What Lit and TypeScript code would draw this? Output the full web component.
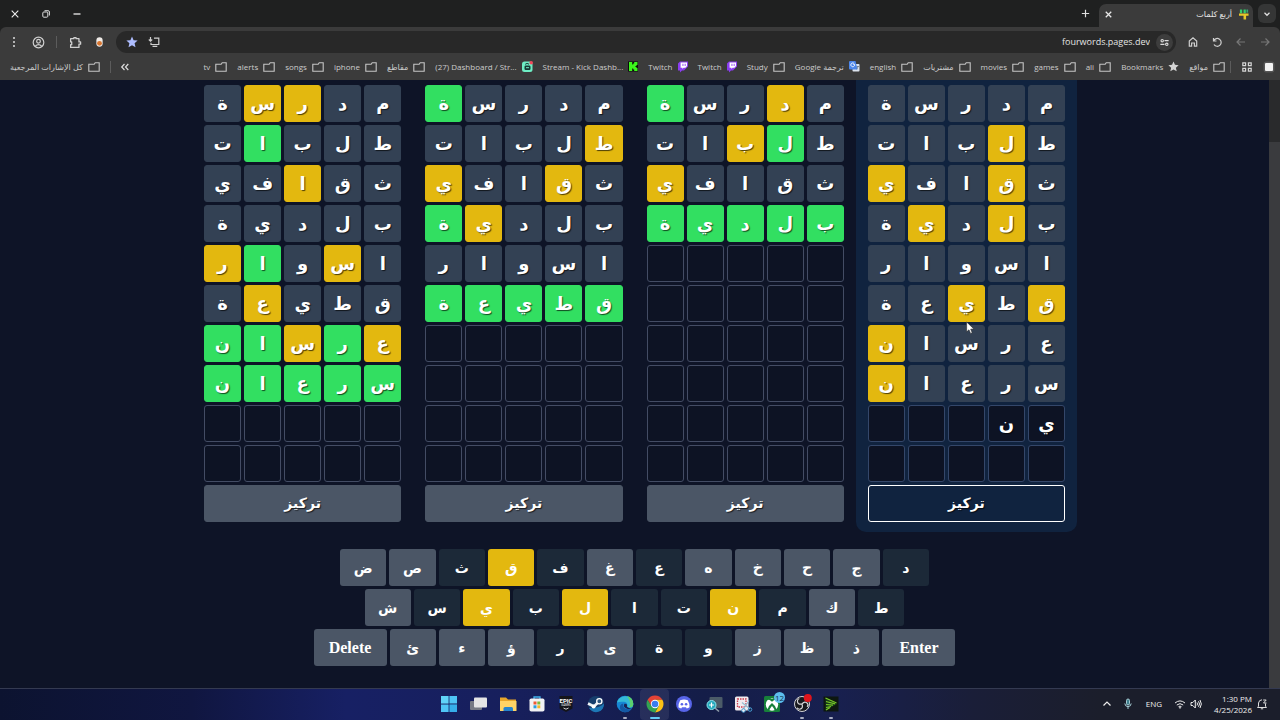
import { LitElement, html, css, svg, TemplateResult } from "lit";
import { customElement, property, state } from "lit/decorators.js";
import { classMap } from "lit/directives/class-map.js";

type Mark = "g" | "y" | "x";
interface Guess { word: string; marks: string }
interface Board { guesses: Guess[]; typing?: string }

const ROWS = 10;
const COLS = 5;

const BOARDS: Board[] = [
  {
    guesses: [
      { word: "مدرسة", marks: "xxxxx" },
      { word: "طلبات", marks: "xyxxx" },
      { word: "ثقافي", marks: "xyxxy" },
      { word: "بلدية", marks: "xyxyx" },
      { word: "اسوار", marks: "xxxxx" },
      { word: "قطيعة", marks: "yxyxx" },
      { word: "عرسان", marks: "xxxxy" },
      { word: "سرعان", marks: "xxxxy" },
    ],
    typing: "ين",
  },
  {
    guesses: [
      { word: "مدرسة", marks: "xyxxg" },
      { word: "طلبات", marks: "xgyxx" },
      { word: "ثقافي", marks: "xxxxy" },
      { word: "بلدية", marks: "ggggg" },
    ],
  },
  {
    guesses: [
      { word: "مدرسة", marks: "xxxxg" },
      { word: "طلبات", marks: "yxxxx" },
      { word: "ثقافي", marks: "xyxxy" },
      { word: "بلدية", marks: "xxxyg" },
      { word: "اسوار", marks: "xxxxx" },
      { word: "قطيعة", marks: "ggggg" },
    ],
  },
  {
    guesses: [
      { word: "مدرسة", marks: "xxyyx" },
      { word: "طلبات", marks: "xxxgx" },
      { word: "ثقافي", marks: "xxyxx" },
      { word: "بلدية", marks: "xxxxx" },
      { word: "اسوار", marks: "xyxgy" },
      { word: "قطيعة", marks: "xxxyx" },
      { word: "عرسان", marks: "ygygg" },
      { word: "سرعان", marks: "ggggg" },
    ],
  },
];

const KEY_ROWS: string[][] = [
  ["ض", "ص", "ث", "ق", "ف", "غ", "ع", "ه", "خ", "ح", "ج", "د"],
  ["ش", "س", "ي", "ب", "ل", "ا", "ت", "ن", "م", "ك", "ط"],
  ["Delete", "ئ", "ء", "ؤ", "ر", "ى", "ة", "و", "ز", "ظ", "ذ", "Enter"],
];
const PRESENT = "قيلن";
const ABSENT = "ثفعدسباتمطرةو";

const folder = html`<svg viewBox="0 0 12 10" width="12" height="10" fill="none" stroke="#c6c6c6" stroke-width="1.1"><path d="M.8 2.2h5.4l1-1.4h4v8.400H.8z"/></svg>`;
const twitch = html`<svg viewBox="0 0 10 11" width="10" height="12"><path fill="#8b3df0" d="M2 0 0 2v7h2v2l2-2h2l4-4V0z"/><path fill="#fff" d="M2.600 1H9v3.600L7.400 6.200H5.600L4.400 7.400V6.200H2.600z"/><path fill="#8b3df0" d="M4.500 2.300h.9v2.200h-.9zM6.700 2.300h.9v2.200h-.9z"/></svg>`;
const kick = html`<svg viewBox="0 0 10 10" width="10" height="11"><path fill="#0b0b0b" d="M0 0h10v10H0z"/><path fill="#3cf51c" d="M1 .5h3.200v2.500h1v-1h1V.500h3.300v3h-1v1h-1v1h1v1h1v3H6.200v-1.500h-1v-1h-1v2.500H1z"/></svg>`;
const streamDash = html`<svg viewBox="0 0 11 11" width="11" height="11"><rect y=".5" width="10.500" height="10.500" rx="2.500" fill="#6eeec5"/><rect x="2.500" y="4.500" width="6" height="4.500" rx="1.200" fill="#183a35"/><path d="M3.200 3.300Q5 1.500 7 3.200" stroke="#183a35" fill="none"/><path d="M4 6.700h3" stroke="#6eeec5"/><circle cx="9.200" cy="1.800" r="1.800" fill="#f0485a"/></svg>`;
const translate = html`<svg viewBox="0 0 11 11" width="11" height="11"><rect x="3.500" y="3" width="7" height="7.500" rx=".8" fill="#dbe3ee"/><path d="M0 1Q0 0 1 0h5.500l2 8.500H1Q0 8.500 0 7.500z" fill="#4c86ea"/><path d="M5.700 3.300H4.200M5.600 3.400A1.900 1.900 0 1 1 5 2.400" stroke="#fff" stroke-width=".9" fill="none"/><path d="M7.700 5.500H10M8.900 5v.8q-.4 1.700-1.300 2.500" stroke="#607080" stroke-width=".7" fill="none"/></svg>`;
const starSmall = html`<svg viewBox="0 0 12 12" width="11" height="11"><path fill="#d4d4d4" d="m6 .5 1.600 3.700 4 .4-3 2.700.9 4L6 9.200 2.500 11.300l.9-4-3-2.700 4-.4z"/></svg>`;

const BOOKMARKS: [string, TemplateResult][] = [
  ["مواقع", folder],
  ["Bookmarks", starSmall],
  ["ali", folder],
  ["games", folder],
  ["movies", folder],
  ["مشتريات", folder],
  ["english", folder],
  ["Google ترجمة", translate],
  ["Study", folder],
  ["Twitch", twitch],
  ["Twitch", twitch],
  ["Stream - Kick Dashb...", kick],
  ["(27) Dashboard / Str...", streamDash],
  ["مقاطع", folder],
  ["iphone", folder],
  ["songs", folder],
  ["alerts", folder],
  ["tv", folder],
];

const line = (body: unknown, size = 12, color = "#cfcfcf", width = 1.2) => html`<svg
  viewBox="0 0 12 12" width=${size} height=${size} fill="none" stroke=${color} stroke-width=${width}>${body}</svg>`;

@customElement("browser-chrome")
export class BrowserChrome extends LitElement {
  static styles = css`
    :host { display: block; direction: rtl; font: 9px/14px "Open Sans", "Noto Sans", "DejaVu Sans", sans-serif; color: #d6d6d6; background: #1f2020; }
    svg { display: block; flex: none; }
    button { border: 0; padding: 0; background: none; color: inherit; font: inherit; display: flex; align-items: center; justify-content: center; flex: none; }
    .strip { display: flex; align-items: flex-end; height: 27px; box-sizing: border-box; padding: 0 4px 0 7px; }
    .strip > button { height: 27px; }
    .strip > .search { width: 18px; height: 19px; border-radius: 6px; background: #353636; margin: 0 0 4px 5px; }
    .tab { display: flex; align-items: center; gap: 7px; width: 154px; height: 23px; box-sizing: border-box; padding: 0 4px 3px 4px; background: #3b3b3b; border-radius: 7px 7px 0 0; }
    .title { flex: 1; font-size: 8px; color: #e4e4e4; }
    .plus { width: 28px; }
    .windows { display: flex; margin-right: auto; height: 27px; }
    .windows button { width: 31px; }
    .windows button:last-child { width: 16px; margin-right: 7px; }
    .bar { display: flex; align-items: center; height: 30px; background: #3b3b3b; border-radius: 6px 6px 0 0; padding: 0 9px 0 8px; box-sizing: border-box; }
    .nav { display: flex; gap: 12px; padding-left: 11px; }
    .box { flex: 1; min-width: 0; height: 22px; border-radius: 11px; background: #282828; display: flex; align-items: center; padding: 0 3px 0 10px; }
    .site { width: 17px; height: 17px; border-radius: 9px; background: #3d3d3d; }
    .url { flex: 1; min-width: 0; border: 0; outline: 0; padding: 0 6px 0 0; background: none; color: #e4e4e4; font: inherit; text-align: right; }
    .marks { display: flex; gap: 10px; }
    .tools { display: flex; align-items: center; padding-right: 5px; }
    .tools button { width: 24px; }
    .tools button:last-child { width: 12px; margin-right: 6px; }
    .rule { width: 1px; height: 12px; background: #5c5c5c; flex: none; }
    .tools .rule { margin: 0 6px; }
    .bookmarks { display: flex; align-items: center; height: 23px; box-sizing: border-box; padding: 0 5px 4px 10px; background: #3b3b3b; font-size: 8px; color: #cccccc; white-space: nowrap; }
    .bookmarks > button { width: 12px; margin-left: 10px; }
    .bookmarks > .more { margin-left: 8px; }
    .list { display: flex; gap: 10px; flex: 1; min-width: 0; padding-right: 5px; overflow: hidden; }
    a { display: flex; align-items: center; gap: 5px; color: inherit; text-decoration: none; flex: none; }
    .all { padding-right: 10px; }
  `;

  render() {
    return html`
      <header>
        <div class="strip">
          <button class="search" aria-label="Search tabs">${line(svg`<path d="m3 4.500 3 3 3-3"/>`, 10, "#e0e0e0", 1.5)}</button>
          <div class="tab" role="tab">
            <svg viewBox="0 0 11 11" width="10" height="11"><path fill="#35cf6b" d="M1 0h2.500v4H1zM5 0h2.500v4H5z"/><path fill="#e6c62a" d="M0 4.300h10.500v2.600H0zM5 7h2.800v4H5z"/><path fill="#37a477" d="M8.200 0h1.800v3.500H8.200z"/></svg>
            <span class="title">أربع كلمات</span>
            <button aria-label="Close tab">${line(svg`<path d="m3 3 6 6M9 3 3 9"/>`, 11, "#e8e8e8", 1.4)}</button>
          </div>
          <button class="plus" aria-label="New tab">${line(svg`<path d="M6 2v8M2 6h8"/>`, 11, "#e0e0e0", 1.3)}</button>
          <div class="windows">
            <button aria-label="Minimize">${line(svg`<path d="M2.500 6h7"/>`, 12, "#eee", 1.3)}</button>
            <button aria-label="Restore">${line(svg`<rect x="2.800" y="4" width="5" height="5.200" rx="1"/><path d="M4.500 2.700h3.600q1.300 0 1.300 1.300v3.500"/>`, 12, "#ddd", 1)}</button>
            <button aria-label="Close">${line(svg`<path d="m2.700 2.700 6.600 6.600M9.300 2.700 2.700 9.300"/>`, 12, "#eee", 1.1)}</button>
          </div>
        </div>
        <div class="bar">
          <div class="nav">
            <button aria-label="Back">${line(svg`<path d="M2 6h8M6.500 2.500 10 6 6.500 9.500"/>`, 12, "#777")}</button>
            <button aria-label="Forward">${line(svg`<path d="M10 6H2M5.500 2.500 2 6l3.500 3.500"/>`, 12, "#777")}</button>
            <button aria-label="Reload">${line(svg`<path d="M2.500 2v3h3M2.700 4.800A3.900 3.900 0 1 1 3 8.500"/>`)}</button>
            <button aria-label="Home">${line(svg`<path d="M2.300 5 6 1.900 9.700 5v5.200H7.400V7H4.600v3.200H2.300z"/>`)}</button>
          </div>
          <div class="box">
            <button class="site" aria-label="Site information">${line(svg`<circle cx="3.500" cy="4" r="1.300"/><circle cx="8.500" cy="8" r="1.300"/><path d="M6 4h4.500M1.500 8H6"/>`, 11, "#ddd")}</button>
            <input class="url" dir="ltr" aria-label="Address" value="fourwords.pages.dev" />
            <div class="marks">
              <button aria-label="Install">${line(svg`<path d="M6 2.200h4.800v6.300H3V6.800M2.500 1v4M.8 3.500l1.700 1.700 1.700-1.700M4.500 10.300h4.800"/>`, 12, "#d0d0d0")}</button>
              <button aria-label="Bookmark"><svg viewBox="0 0 12 12" width="12" height="12"><path fill="#aebdff" d="m6 .5 1.600 3.700 4 .4-3 2.700.9 4L6 9.200 2.500 11.300l.9-4-3-2.700 4-.4z"/></svg></button>
            </div>
          </div>
          <div class="tools">
            <button aria-label="Extension"><svg viewBox="0 0 10 12" width="9" height="12"><rect x="1.500" y=".8" width="7" height="10.500" rx="3.500" fill="#f0ece8"/><circle cx="5" cy="7.500" r="2.700" fill="#d9752f"/></svg></button>
            <button aria-label="Extensions">${line(svg`<path d="M1.500 2.500h3v-1h2v1H9.200v3h1.500v2H9.200v3H1.500V8h1V5.500h-1z" stroke-linejoin="round"/>`, 13)}</button>
            <span class="rule"></span>
            <button aria-label="Profile">${line(svg`<circle cx="6" cy="6" r="4.900"/><circle cx="6" cy="4.800" r="1.700"/><path d="M3 9.500Q6 6.600 9 9.500"/>`, 13, "#cfcfcf", 1.1)}</button>
            <button aria-label="Menu"><svg viewBox="0 0 4 12" width="4" height="12" fill="#ddd"><circle cx="2" cy="2" r="1"/><circle cx="2" cy="6" r="1"/><circle cx="2" cy="10" r="1"/></svg></button>
          </div>
        </div>
        <nav class="bookmarks">
          <button aria-label="Tab groups"><svg viewBox="0 0 12 12" width="12" height="12"><rect x=".5" y=".5" width="11" height="11" rx="3" fill="#565656"/><rect x="2" y="2" width="8" height="8" rx="1" fill="#f2f2f2"/></svg></button>
          <button aria-label="Apps">${line(svg`<path d="M1.800 1.800h2.800v2.800H1.800zM7.400 1.800h2.800v2.800H7.400zM1.800 7.400h2.800v2.800H1.800zM7.400 7.400h2.800v2.800H7.400z"/>`, 12, "#d6d6d6")}</button>
          <span class="rule"></span>
          <div class="list">
            ${BOOKMARKS.map(([label, icon]) => html`<a href="#">${icon}<span dir="ltr">${label}</span></a>`)}
          </div>
          <button class="more" aria-label="More bookmarks">${line(svg`<path d="M5.500 3 2.700 6l2.800 3M9.300 3 6.500 6l2.800 3"/>`, 12, "#ddd")}</button>
          <span class="rule"></span>
          <a class="all" href="#">${folder}<span>كل الإشارات المرجعية</span></a>
        </nav>
      </header>
    `;
  }
}

@customElement("word-board")
export class WordBoard extends LitElement {
  @property({ attribute: false }) board!: Board;
  @property({ type: Boolean, reflect: true }) focused = false;

  static styles = css`
    :host { display: flex; flex-direction: column; gap: 3px; padding: 5px 12px 10px; border-radius: 0 0 10px 10px; direction: rtl; font-family: "DejaVu Sans", sans-serif; }
    :host([focused]) { background: #10233f; }
    .grid { display: grid; grid-template-columns: repeat(5, 1fr); gap: 3px; }
    .cell { height: 37px; box-sizing: border-box; border-radius: 3px; display: flex; align-items: center; justify-content: center; font-size: 18px; line-height: 24px; font-weight: 700; color: #fff; text-shadow: 1px 1px 1px #000a; border: 1px solid #434c64; background: #0d1324; }
    :host([focused]) .cell { border-color: #34476a; }
    .cell.x, :host([focused]) .cell.x { background: #334154; border-color: #334154; }
    .cell.y, :host([focused]) .cell.y { background: #e3b80f; border-color: #e3b80f; }
    .cell.g, :host([focused]) .cell.g { background: #32df61; border-color: #32df61; }
    .focus { height: 37px; border: 1px solid #4b5666; border-radius: 3px; background: #4b5666; color: #fff; font: 700 14px/20px "DejaVu Sans", sans-serif; text-shadow: 1px 1px 1px #000a; padding: 0 0 2px; }
    :host([focused]) .focus { background: #10233f; border-color: #fff; }
  `;

  private cells() {
    const out: { ch: string; mark?: Mark }[] = [];
    for (let r = 0; r < ROWS; r++) {
      const guess = this.board.guesses[r];
      const typed = r === this.board.guesses.length ? this.board.typing ?? "" : "";
      for (let c = 0; c < COLS; c++) {
        out.push({ ch: guess ? guess.word[c] : typed[c] ?? "", mark: guess?.marks[c] as Mark });
      }
    }
    return out;
  }

  render() {
    return html`
      <div class="grid">
        ${this.cells().map(({ ch, mark }) => html`<div class=${classMap({ cell: true, x: mark === "x", y: mark === "y", g: mark === "g" })}>${ch}</div>`)}
      </div>
      <button class="focus" @click=${() => this.dispatchEvent(new CustomEvent("pick"))}>تركيز</button>
    `;
  }
}

@customElement("letter-keyboard")
export class LetterKeyboard extends LitElement {
  static styles = css`
    :host { display: flex; flex-direction: column; align-items: center; gap: 3px; direction: ltr; }
    .row { display: flex; gap: 3px; width: 100%; }
    .upper { max-width: 589px; }
    .middle { max-width: 540px; }
    .lower { max-width: 642px; }
    .key { flex: 1; min-width: 0; height: 37px; border: 0; padding: 0; border-radius: 3px; background: #4b5666; color: #fff; font: 700 14px/20px "DejaVu Sans", sans-serif; }
    .key.present { background: #e3b80f; }
    .key.absent { background: #1c2938; }
    .key.wide { flex: 0 0 73px; font: 700 16px/20px "Liberation Serif", serif; }
  `;
  render() {
    return KEY_ROWS.map((keys, i) => html`
      <div class="row ${["upper", "middle", "lower"][i]}">
        ${keys.map((k) => html`<button class=${classMap({ key: true, wide: k.length > 1, present: PRESENT.includes(k), absent: ABSENT.includes(k) })}>${k}</button>`)}
      </div>`);
  }
}

const app = (body: unknown) => html`<svg viewBox="0 0 20 20" width="20" height="20">${body}</svg>`;
const APPS: { name: string; icon: TemplateResult; mark?: string }[] = [
  { name: "Start", icon: app(svg`<path fill="#60d3f8" d="M2 2h7.600v7.600H2z"/><path fill="#4fc5f5" d="M10.400 2H18v7.600h-7.600zM2 10.400h7.600V18H2z"/><path fill="#36aeea" d="M10.400 10.400H18V18h-7.600z"/>`) },
  { name: "Task view", icon: app(svg`<rect x="2" y="7" width="12" height="9" rx="1" fill="#777a84"/><rect x="6" y="3.500" width="13" height="10" rx="1" fill="#e5e5e5"/>`) },
  { name: "File Explorer", icon: app(svg`<path fill="#e8a62a" d="M2 3.500h6l2 2h8V17H2z"/><path fill="#ffd366" d="M2 7h16.500v10H2z"/><path fill="#2584cf" d="M5.500 17v-2.500q0-1.500 1.500-1.500h6.500q1.500 0 1.500 1.500V17z"/>`) },
  { name: "Store", icon: app(svg`<path d="M7 5V3h6v2" fill="none" stroke="#42b2ec" stroke-width="1.300"/><rect x="2.500" y="4.500" width="15" height="13" rx="1.800" fill="#f1f2f4"/><path fill="#ef5a35" d="M6.500 7.500h3v3h-3z"/><path fill="#7eb93b" d="M10.300 7.500h3v3h-3z"/><path fill="#2a9ee0" d="M6.500 11.300h3v3h-3z"/><path fill="#f4b92e" d="M10.300 11.300h3v3h-3z"/>`) },
  { name: "Epic Games", icon: app(svg`<path fill="#15151a" d="M3.500 2h13v12.500L10 18l-6.500-3.500z"/><text x="10" y="8.800" text-anchor="middle" font-family="Roboto" font-size="6" font-weight="700" fill="#fff">EPIC</text><text x="10" y="12" text-anchor="middle" font-family="Roboto" font-size="2.800" fill="#fff">GAMES</text><path d="m7.500 14 2.500 1.200 2.500-1.200" fill="none" stroke="#fff" stroke-width=".8"/>`) },
  { name: "Steam", icon: app(svg`<circle cx="10" cy="10" r="8" fill="#173e6c"/><path fill="#1d77b5" d="M3 14a8 8 0 0 0 15-4.500Q14 14 3 14"/><path d="m2 9.500 6 3 5-5" stroke="#f0f3f6" stroke-width="2.600" fill="none"/><circle cx="13.300" cy="7.300" r="2.600" fill="#30577f" stroke="#fff" stroke-width="1.300"/><circle cx="7.600" cy="12.600" r="2" fill="#fff"/>`) },
  { name: "Edge", mark: "dot", icon: app(svg`<circle cx="10" cy="10" r="8.300" fill="#1687d4"/><path fill="#35b9d8" d="M2 8.500A8.300 8.300 0 0 1 18.300 10q0 3.500-4 3.500-2.500 0-2.200-1.500.8-3.600-3-4.200-4-.5-7.100.7"/><path fill="#5bd06f" d="M12 2A8.300 8.300 0 0 1 18.300 10q0 3.500-4 3.500 2.500-5-2.300-11.500"/><path fill="#1458a4" d="M8.200 9.500Q6.800 16 16.500 15.200 13.500 19 9 18.200 4 16.500 5 12q1-2.500 3.200-2.500"/><path fill="#192255" d="M9.500 9.700q-2 3 2 4.800 3.300 1.200 5.500-.4-2.800.3-4-.6-1.700-1-.8-2.600-.8-1.500-2.700-1.200"/>`) },
  { name: "Chrome", mark: "bar", icon: app(svg`<path fill="#e54335" d="M2.600 5.800a8.500 8.500 0 0 1 14.800 0H10L6.300 12z"/><path fill="#fbc115" d="M17.400 5.800A8.500 8.500 0 0 1 10 18.500l3.700-6.400Q15.300 8 10 5.800z"/><path fill="#34a352" d="M10 18.500A8.500 8.500 0 0 1 2.600 5.800l3.700 6.300q2.600 3.400 7.400 0z"/><circle cx="10" cy="10" r="4.200" fill="#fff"/><circle cx="10" cy="10" r="3.300" fill="#3b7ded"/>`) },
  { name: "Discord", icon: app(svg`<circle cx="10" cy="10" r="8" fill="#5865e9"/><path fill="#fff" d="M6.200 6.200Q10 4.600 13.800 6.200q2 3.500 1.700 7-1.500 1.100-2.800 1.200l-.7-1.200H8l-.7 1.200q-1.500-.2-2.800-1.200-.3-3.500 1.700-7"/><circle cx="7.900" cy="10.300" r="1.300" fill="#5865e9"/><circle cx="12.100" cy="10.300" r="1.300" fill="#5865e9"/>`) },
  { name: "Magnifier", icon: app(svg`<rect x="5.500" y="3" width="13" height="11" rx="1" fill="#4b5b68"/><path d="m11 14 4 3.500" stroke="#91a0aa" stroke-width="1.500"/><circle cx="7.500" cy="11" r="4.500" fill="#25a9bd" stroke="#8be4ed"/><path d="M7.500 8.600v4.800M5.100 11h4.800" stroke="#fff" stroke-width="1.200"/>`) },
  { name: "Snipping Tool", icon: app(svg`<rect x="2" y="2.500" width="13.500" height="14" rx="1.500" fill="#f1ecf0"/><path d="M4.500 5h8.500v8H4.500z" fill="none" stroke="#c93c4e" stroke-width="1.300" stroke-dasharray="1.500 1"/><path d="M9 8.500 17 15M16 6.500 10.500 15" stroke="#96bfd3" stroke-width="1.200"/><circle cx="17" cy="15.500" r="1.800" fill="none" stroke="#459acd"/><circle cx="10.500" cy="16.500" r="1.800" fill="#e9eef6" stroke="#459acd"/>`) },
  { name: "Xbox", mark: "count", icon: app(svg`<rect x="2" y="2" width="16" height="16" rx="1.500" fill="#17803a"/><circle cx="10" cy="10.500" r="6.200" fill="#fff"/><path fill="#17803a" d="M5 5.500q3 0 5 2.300 2-2.300 5-2.300L13.500 4Q11.500 4 10 5 8.500 4 6.500 4zM5.500 15.500Q6.500 11.500 10 9q3.500 2.500 4.500 6.500L13 17q-1-3-3-5-2 2-3 5z"/>`) },
  { name: "OBS", mark: "dot", icon: app(svg`<circle cx="10" cy="10" r="7.500" fill="#18191d" stroke="#d5d5d8"/><path d="M10 10q-4.500.8-4.600-3 .1-2 1.900-2.500M10 10q3-3.400 5.500-.5 1.300 2-.5 3.200M10 10q1.500 4.300-2 5.200-2 .3-3-1.400" fill="none" stroke="#d5d5d8" stroke-width="1.200"/><circle cx="15.800" cy="4" r="4" fill="#df151d"/>`) },
  { name: "Player", mark: "dot", icon: app(svg`<path d="M2.500 2.500h15v15h-15z" fill="#0d1710"/><path d="M4.500 3.500 16 10 4.500 16.500z" fill="#17391a"/><path d="m4.500 4 11 5M5 7.500l9 2.300M5 10.500l7 .7M5 13.500l5-1M5 16l4-2.500" stroke="#78c927" stroke-width="1.200"/>`) },
];

@customElement("task-bar")
export class TaskBar extends LitElement {
  static styles = css`
    :host { display: grid; grid-template-columns: 1fr 412px 1fr; align-items: center; height: 32px; box-sizing: border-box; border-top: 1px solid #343a51; direction: ltr; color: #eee; font: 8px/11px "Open Sans", "Noto Sans", sans-serif; background: linear-gradient(90deg, #0c1330 0%, #101640 15%, #172064 27%, #171f5c 40%, #141d48 55%, #182050 65%, #1a1e38 76%, #1b1e2b 86%, #1b1e2b 100%); }
    svg { display: block; flex: none; }
    .apps { grid-column: 2; display: flex; height: 31px; }
    .app { position: relative; flex: 1; min-width: 0; height: 31px; border: 0; padding: 0 0 2px; background: none; display: flex; align-items: center; justify-content: center; border-radius: 4px; }
    .app.bar { background: #ffffff14; }
    .dot::after, .bar::after { content: ""; position: absolute; bottom: 1px; left: 50%; width: 4px; height: 2px; margin-left: -2px; border-radius: 1px; background: #a9adc0; }
    .bar::after { width: 10px; margin-left: -5px; background: #62cdf7; }
    .badge { position: absolute; top: 3px; right: 2px; min-width: 11px; height: 11px; border-radius: 6px; background: #5dbfee; color: #12304a; font: 8px/11px "Open Sans", sans-serif; text-align: center; }
    .tray { display: flex; justify-content: flex-end; align-items: center; padding: 0 12px 2px 0; }
    .tray > svg { margin-left: 4px; }
    .lang { margin: 0 8px 0 12px; }
    .clock { text-align: right; margin: 0 4px 0 12px; }
    .clock + svg { margin-left: 0; }
    .clock div { white-space: nowrap; }
    .mic { margin: 0 0 0 9px; }
  `;
  render() {
    return html`
      <div class="apps">
        ${APPS.map((a) => html`<button class="app ${a.mark ?? ""}" aria-label=${a.name}>${a.icon}${a.mark === "count" ? html`<span class="badge">12</span>` : ""}</button>`)}
      </div>
      <div class="tray">
        ${line(svg`<path d="m2.500 7.500 3.500-3.500 3.500 3.500"/>`, 12, "#eee")}
        <span class="mic">${line(svg`<rect x="4.500" y="1" width="3" height="6" rx="1.500" fill="#3f7f8d"/><path d="M2.800 5.500Q3 8.500 6 8.700 9 8.500 9.200 5.500M6 8.700V11"/>`, 12, "#a5cbd3", 1)}</span>
        <span class="lang">ENG</span>
        ${line(svg`<path d="M1 5Q6 .8 11 5M2.800 7Q6 4.300 9.200 7M4.500 8.700q1.500-1.200 3 0"/><circle cx="6" cy="9.800" r=".5"/>`, 12, "#eee", 1)}
        ${line(svg`<path d="M1 4.500h1.800L5.300 2v8L2.800 7.500H1zM7 4.500q1 1.500 0 3M8.500 3.200q2 2.800 0 5.600M10 2q2.700 4 0 8"/>`, 12, "#eee", 1)}
        <div class="clock"><div>1:30 PM</div><div>4/25/2026</div></div>
        ${line(svg`<path d="M9.500 5.500v2.700l1 1.300H1.500l1-1.300V5Q3 1.900 6 1.800M4.800 10.800h2.400M7.200 2h3L7.500 5h3"/>`, 12, "#ddd", 1)}
      </div>
    `;
  }
}

@customElement("app-root")
export class AppRoot extends LitElement {
  @state() private active = 0;

  static styles = css`
    :host { display: flex; flex-direction: column; height: 100vh; overflow: hidden; background: #0e1427; }
    browser-chrome, task-bar { flex: none; }
    .view { position: relative; flex: 1; min-height: 0; display: flex; overflow: hidden; }
    .page { flex: 1; min-width: 0; }
    .boards { display: grid; grid-template-columns: repeat(4, 1fr); max-width: 885px; margin: 0 auto 17px; direction: rtl; }
    .scroll { flex: none; width: 11px; padding-top: 62px; box-sizing: border-box; background: #292a2c; display: flex; }
    .thumb { flex: 1; background: #3a3b3e; }
    .pointer { position: absolute; left: 966px; top: 241px; }
  `;

  render() {
    return html`
      <browser-chrome></browser-chrome>
      <div class="view">
        <main class="page">
          <div class="boards">
            ${BOARDS.map((b, i) => html`<word-board .board=${b} ?focused=${i === this.active} @pick=${() => { this.active = i; }}></word-board>`)}
          </div>
          <letter-keyboard></letter-keyboard>
        </main>
        <div class="scroll"><div class="thumb"></div></div>
        <svg class="pointer" viewBox="0 0 10 15" width="9" height="14"><path d="M.7.8v11l2.600-2.300 1.800 4 1.800-.8-1.700-3.900 3.500-.3z" fill="#fff" stroke="#222" stroke-width=".6"/></svg>
      </div>
      <task-bar></task-bar>
    `;
  }
}
